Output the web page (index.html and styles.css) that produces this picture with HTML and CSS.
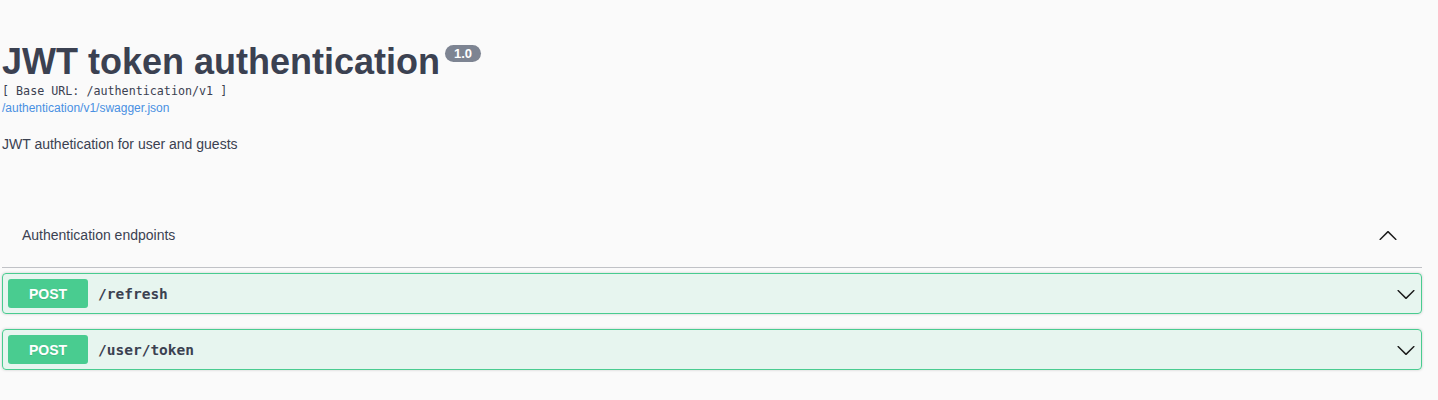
FILE: index.html
```html
<!DOCTYPE html>
<html lang="en">
<head>
<meta charset="utf-8">
<title>JWT token authentication</title>
<link rel="stylesheet" href="styles.css">
</head>
<body>
<div class="wrapper">
  <div class="info">
    <h2 class="title">JWT token authentication<span class="version">1.0</span></h2>
    <pre class="base-url">[ Base URL: /authentication/v1 ]</pre>
    <a class="spec-link" href="#">/authentication/v1/swagger.json</a>
    <p class="description">JWT authetication for user and guests</p>
  </div>

  <section class="tag-section">
    <h3 class="tag">
      <span class="tag-desc">Authentication endpoints</span>
      <span class="tag-toggle">
        <svg width="20" height="20" viewBox="0 0 20 20"><path d="M17.418 14.908c.272.268.709.268.979 0s.271-.701 0-.969l-7.908-7.83c-.27-.268-.707-.268-.979 0l-7.908 7.83c-.27.268-.27.701 0 .969.271.268.709.268.979 0L10 7.767l7.418 7.141z"/></svg>
      </span>
    </h3>

    <div class="opblock">
      <span class="method">POST</span>
      <span class="path">/refresh</span>
      <svg class="chev" width="20" height="20" viewBox="0 0 20 20"><path d="M17.418 6.109c.272-.268.709-.268.979 0s.271.701 0 .969l-7.908 7.83c-.27.268-.707.268-.979 0l-7.908-7.83c-.27-.268-.27-.701 0-.969.271-.268.709-.268.979 0L10 13.25l7.418-7.141z"/></svg>
    </div>

    <div class="opblock">
      <span class="method">POST</span>
      <span class="path">/user/token</span>
      <svg class="chev" width="20" height="20" viewBox="0 0 20 20"><path d="M17.418 6.109c.272-.268.709-.268.979 0s.271.701 0 .969l-7.908 7.83c-.27.268-.707.268-.979 0l-7.908-7.83c-.27-.268-.27-.701 0-.969.271-.268.709-.268.979 0L10 13.25l7.418-7.141z"/></svg>
    </div>
  </section>
</div>
</body>
</html>
```

FILE: styles.css
```css
html, body {
  margin: 0;
  padding: 0;
  background: #fafafa;
}

body {
  font-family: "Liberation Sans", Arial, sans-serif;
  color: #3b4151;
}

.wrapper {
  margin: 0 16px 0 2px;
  padding-top: 42px;
}

.info {
  display: flex;
  flex-direction: column;
  align-items: flex-start;
}

.title {
  margin: 0;
  display: flex;
  align-items: flex-start;
  font-size: 36px;
  line-height: 40px;
  font-weight: 700;
  color: #3b4151;
}

.version {
  margin: 3px 0 0 5px;
  padding: 0 9px;
  height: 17px;
  line-height: 17px;
  border-radius: 57px;
  background: #7d8492;
  color: #fff;
  font-size: 13px;
  font-weight: 700;
}

.base-url {
  margin: 2px 0 0 0;
  font-family: "DejaVu Sans Mono", "Liberation Mono", monospace;
  font-size: 11.7px;
  line-height: 14px;
  color: #3b4151;
}

.spec-link {
  margin-top: 3px;
  font-size: 12px;
  line-height: 14px;
  color: #4990e2;
  text-decoration: none;
}

.description {
  margin: 21px 0 0 0;
  font-size: 14px;
  line-height: 16px;
  color: #3b4151;
}

.tag-section {
  margin-top: 51px;
}

.tag {
  margin: 0 0 5px 0;
  height: 64px;
  display: flex;
  align-items: center;
  padding: 0 24px 0 20px;
  border-bottom: 1px solid rgba(59, 65, 81, 0.3);
  font-weight: 400;
}

.tag-desc {
  flex: 1;
  font-size: 14px;
  line-height: 16px;
}

.tag-toggle {
  display: flex;
}

.tag-toggle svg,
.chev {
  fill: #1b1b1b;
}

.opblock {
  display: flex;
  align-items: center;
  padding: 5px;
  margin-bottom: 15px;
  border: 1px solid #49cc90;
  border-radius: 4px;
  background: rgba(73, 204, 144, 0.1);
  box-shadow: 0 0 3px rgba(0, 0, 0, 0.19);
}

.method {
  min-width: 80px;
  padding: 7px 0 5px;
  line-height: 17px;
  text-align: center;
  border-radius: 3px;
  background: #49cc90;
  color: #fff;
  font-size: 14px;
  font-weight: 700;
  text-shadow: 0 1px 0 rgba(0, 0, 0, 0.1);
}

.path {
  flex: 1;
  padding: 0 10px;
  font-family: "DejaVu Sans Mono", "Liberation Mono", monospace;
  font-size: 14.5px;
  font-weight: 700;
  color: #3b4151;
}

.chev {
  flex: none;
}
```
